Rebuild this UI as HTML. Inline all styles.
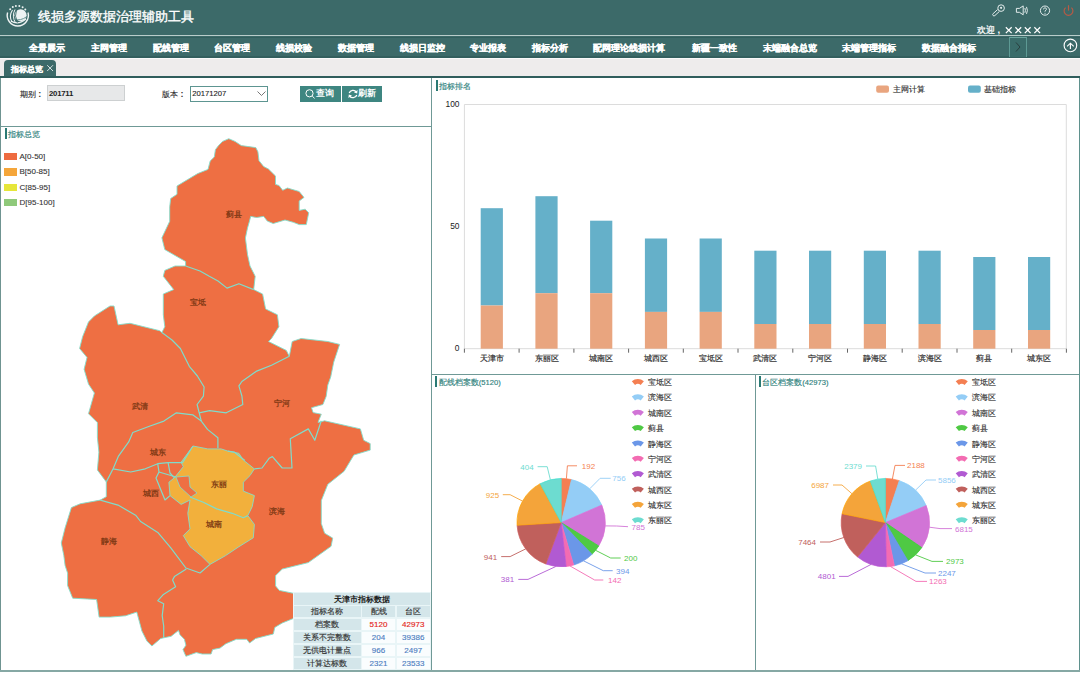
<!DOCTYPE html>
<html><head><meta charset="utf-8">
<style>
*{box-sizing:border-box;margin:0;padding:0}
html,body{width:1080px;height:675px;overflow:hidden;background:#fff;font-family:"Liberation Sans",sans-serif;position:relative}
.abs{position:absolute}
#hdr{left:0;top:0;width:1080px;height:35px;background:#3c6a69}
#hline{left:0;top:35px;width:1080px;height:1.5px;background:#b9cdcb}
#nav{left:0;top:36px;width:1080px;height:21.5px;background:#3c6a69}
.ni{position:absolute;top:38px;height:21px;line-height:21px;color:#fff;font-weight:bold;-webkit-text-stroke:0.25px #fff;font-size:9.3px;white-space:nowrap}
#tabbar{left:0;top:57px;width:1080px;height:20px;background:#eeecec}
#tab{left:4px;top:60px;width:52px;height:17px;background:#3c6a69;border-radius:4px 4px 0 0}
#dline{left:0;top:76.3px;width:1080px;height:2px;background:#2f5d5c}
.vl{position:absolute;background:#6f9996;width:1px}
.hl{position:absolute;background:#6f9996;height:1px}
.ttl{position:absolute;font-size:8px;color:#2f827d;white-space:nowrap;line-height:10px;-webkit-text-stroke:0.15px #2f827d}
.ttl:before{content:"";position:absolute;left:-3.5px;top:-1.5px;width:2px;height:11px;background:#2a7a74}
.lbl{position:absolute;font-size:9px;color:#333;white-space:nowrap;-webkit-text-stroke:0.1px #333}
</style></head><body>
<div id="hdr" class="abs"></div>
<div id="hline" class="abs"></div>
<div id="nav" class="abs"></div>
<div id="tabbar" class="abs"></div>
<div class="abs" style="left:0;top:36.5px;width:1080px;height:1px;background:#325f5e"></div>
<div class="abs" style="left:0;top:56px;width:1080px;height:1.5px;background:#335f5e"></div>
<div class="abs" style="left:0;top:57.5px;width:1080px;height:1.5px;background:#f9f9f9"></div>
<div id="tab" class="abs"></div>
<div id="dline" class="abs"></div>

<!-- logo -->
<svg class="abs" style="left:2px;top:0px" width="30" height="30" viewBox="0 0 30 30">
<g fill="#eef3f3">
<circle cx="8.2" cy="9.3" r="1"/><circle cx="10.8" cy="7.1" r="1"/><circle cx="13.9" cy="5.9" r="1"/><circle cx="17.3" cy="5.9" r="1"/><circle cx="20.6" cy="7.2" r="1"/><circle cx="23.3" cy="9.4" r="1"/>
<circle cx="18.6" cy="15.2" r="6"/>
</g>
<g fill="none" stroke="#eef3f3">
<path d="M5.6 12.5 A10.6 10.6 0 1 0 26 12.5" stroke-width="1.4"/>
<path d="M10.5 10 Q6.5 16 10 22" stroke-width="1.1"/>
<path d="M13 9.5 Q9.5 16 13.5 23" stroke-width="1"/>
<path d="M9 21 Q16 25.5 24 19" stroke-width="1.2"/>
</g>
<path d="M12.5 19 Q18 21.5 25 16.5" fill="none" stroke="#5c8a89" stroke-width="0.9"/>
<path d="M14.5 10 Q12 16 15.5 22.5" fill="none" stroke="#3c6a69" stroke-width="0.9"/>
</svg>
<div class="abs" style="left:38px;top:6.5px;font-size:13px;line-height:20px;color:#fff;white-space:nowrap;-webkit-text-stroke:0.35px #fff">线损多源数据治理辅助工具</div>
<!-- icons -->
<svg class="abs" style="left:990px;top:3px" width="86" height="16" viewBox="0 0 86 16">
<g fill="none" stroke="#e3ecec" stroke-width="1" stroke-linejoin="round">
<path d="M9.38 8.46 L4.88 12.56 A1.3 1.3 0 0 1 3.12 10.64 L7.62 6.54"/>
<circle cx="11.1" cy="5.1" r="3.3"/>
<path d="M26.4 5.4 h3 l3.8 -2.5 v8.9 l-3.8 -2.5 h-3 z"/><path d="M34.9 5 q1 2.4 0 4.8"/><path d="M36.5 3.9 q1.8 3.5 0 7"/>
<circle cx="55" cy="7.6" r="4.6"/>
<path d="M53.5 6.4 q0 -1.6 1.5 -1.6 q1.5 0 1.5 1.4 q0 0.9 -1.5 1.7 v0.8" stroke-width="0.9"/>
</g>
<circle cx="11.1" cy="4.8" r="1.1" fill="#e3ecec"/>
<circle cx="55" cy="10.2" r="0.55" fill="#e3ecec"/>
<g fill="none" stroke="#b85a45" stroke-width="1.15"><path d="M75.6 4.6 a4.4 4.4 0 1 0 5.8 0"/><path d="M78.5 2.2 v5.4"/></g>
</svg>
<div class="abs" style="left:976.5px;top:24.5px;font-size:9px;line-height:11px;color:#fff;white-space:nowrap;-webkit-text-stroke:0.25px #fff">欢迎</div><div class="abs" style="left:997.5px;top:24px;font-size:9.5px;line-height:11px;color:#fff;white-space:nowrap;font-weight:bold">,</div>
<svg class="abs" style="left:1004px;top:26px" width="40" height="9" viewBox="0 0 40 9"><g stroke="#fff" stroke-width="1.25"><path d="M1.85 1.3 L7.65 7.1 M7.65 1.3 L1.85 7.1"/><path d="M11.40 1.3 L17.20 7.1 M17.20 1.3 L11.40 7.1"/><path d="M20.80 1.3 L26.60 7.1 M26.60 1.3 L20.80 7.1"/><path d="M30.35 1.3 L36.15 7.1 M36.15 1.3 L30.35 7.1"/></g></svg>
<div class="ni" style="left:29px">全景展示</div>
<div class="ni" style="left:91px">主网管理</div>
<div class="ni" style="left:152.5px">配线管理</div>
<div class="ni" style="left:214px">台区管理</div>
<div class="ni" style="left:276px">线损校验</div>
<div class="ni" style="left:338px">数据管理</div>
<div class="ni" style="left:400px">线损日监控</div>
<div class="ni" style="left:470px">专业报表</div>
<div class="ni" style="left:532.3px">指标分析</div>
<div class="ni" style="left:593.3px">配网理论线损计算</div>
<div class="ni" style="left:691.7px">新疆一致性</div>
<div class="ni" style="left:762.7px">末端融合总览</div>
<div class="ni" style="left:841.7px">末端管理指标</div>
<div class="ni" style="left:921.7px">数据融合指标</div>
<!-- nav arrow box -->
<div class="abs" style="left:1009px;top:36.5px;width:17.5px;height:20px;background:#3a6c6a;border-left:1px solid #5d9a94;border-right:1px solid #5d9a94;border-top:1px solid #6aa39c"></div>
<svg class="abs" style="left:1013px;top:41px" width="10" height="12" viewBox="0 0 10 12"><path d="M3 1.5 L7 6 L3 10.5" fill="none" stroke="#2a3f3f" stroke-width="1"/></svg>
<svg class="abs" style="left:1063px;top:38px" width="15" height="15" viewBox="0 0 15 15"><g fill="none" stroke="#fff" stroke-width="1.15"><circle cx="7.4" cy="7.4" r="6.3"/><path d="M7.4 10.9 V5.2 M4.1 8.3 L7.4 5.2 L10.7 8.3"/></g></svg>
<!-- tab -->
<div class="abs" style="left:11px;top:61.5px;font-size:8px;line-height:15px;color:#fff;font-weight:bold;-webkit-text-stroke:0.2px #fff;white-space:nowrap">指标总览</div>
<svg class="abs" style="left:46px;top:64px" width="8" height="8" viewBox="0 0 8 8"><path d="M1.2 1.2 L7 7 M7 1.2 L1.2 7" stroke="#e6eeee" stroke-width="0.9"/></svg>



<!-- map -->
<svg class="abs" style="left:0;top:0" width="431" height="669" viewBox="0 0 431 669">
<polygon points="215.4,149.7 218.5,145.6 222.6,141.4 228.8,138.7 235.0,141.4 241.3,145.6 255.8,147.6 257.9,151.8 259.0,160.7 263.7,166.6 268.4,169.0 275.5,176.0 275.5,184.4 279.0,185.5 282.7,190.3 287.4,188.0 299.2,191.5 304.0,197.4 299.2,201.0 299.2,210.4 305.2,209.2 308.7,212.8 306.3,224.6 299.2,224.6 293.3,222.3 285.0,220.0 273.2,223.5 267.3,221.1 263.7,216.4 256.6,217.5 250.7,216.4 249.5,221.0 247.5,228.0 245.4,238.0 247.5,254.5 250.0,266.0 255.2,276.3 253.7,289.6 262.6,294.0 265.6,308.9 277.4,314.8 278.9,326.7 271.5,338.5 268.5,341.5 286.3,350.4 289.3,356.3 292.2,341.5 301.1,338.5 327.8,341.5 339.6,344.4 333.7,362.2 330.7,377.0 327.8,385.0 326.2,396.3 322.9,404.5 311.5,407.7 313.1,412.6 321.3,414.2 318.0,422.4 324.6,420.8 360.4,428.9 363.7,440.3 370.2,443.6 370.2,450.1 353.9,455.0 344.1,471.3 327.8,484.3 321.3,500.6 321.3,523.5 324.6,533.2 332.7,538.1 331.1,546.3 308.3,562.6 282.2,569.1 275.6,575.6 275.6,585.9 279.3,590.4 293.3,593.3 300.0,594.0 300.0,618.0 293.3,618.5 282.2,623.0 274.8,627.4 273.3,634.0 255.6,638.5 249.6,643.0 246.7,639.3 236.3,639.3 225.9,643.7 220.0,648.1 212.6,649.6 211.1,654.0 202.2,654.0 196.3,652.6 185.9,656.3 183.0,649.6 185.9,645.2 184.4,639.3 180.0,634.8 178.5,630.4 171.1,636.3 163.7,637.8 160.7,638.5 151.9,646.0 146.9,641.0 141.9,631.0 136.8,612.1 125.5,615.8 110.4,617.1 99.1,617.1 96.6,599.5 72.7,598.2 67.6,585.6 67.6,573.1 65.1,565.5 63.8,555.4 61.3,542.9 65.1,527.8 71.4,507.6 80.2,503.8 100.3,500.1 106.3,496.7 106.3,481.9 97.4,470.0 98.9,452.2 97.4,437.4 97.4,422.6 88.5,413.7 94.4,393.0 88.5,384.1 84.1,369.3 87.0,357.4 79.6,348.5 82.6,336.7 88.5,321.9 94.4,316.0 110.0,306.0 114.0,306.0 118.1,324.8 130.0,323.3 159.6,330.7 161.9,332.6 164.8,326.7 163.3,314.8 163.3,294.0 173.7,289.6 163.3,276.3 164.8,270.4 175.0,266.0 185.6,266.0 185.6,261.5 164.8,249.6 161.9,237.8 169.7,221.3 169.7,206.8 170.7,198.5 177.0,194.3 177.0,186.0 187.3,179.8 197.7,173.6 208.0,169.4 210.2,161.0 214.3,157.0" fill="#ee6f43" stroke="#84dccb" stroke-width="0.9" stroke-linejoin="round"/>
<polygon points="193.0,446.0 207.8,448.9 221.1,448.9 227.8,451.1 238.9,453.3 243.3,460.0 254.4,468.9 250.0,475.6 243.3,482.2 243.3,491.1 254.4,495.6 252.2,506.7 247.8,515.6 254.4,524.4 253.3,537.8 238.9,546.7 225.6,555.6 210.0,564.4 201.1,555.6 190.0,546.7 183.3,535.6 190.0,528.9 187.8,513.3 190.0,500.0 181.1,504.4 170.0,495.6 168.9,482.2 174.4,477.8 183.3,466.7 181.1,462.2" fill="#f2b03c" stroke="#84dccb" stroke-width="0.9"/>
<polygon points="176.0,477.0 189.0,476.0 190.0,487.0 197.0,493.0 191.0,497.0 180.0,487.0" fill="#ee6f43" stroke="#84dccb" stroke-width="0.8"/>
<g fill="none" stroke="#7fdccb" stroke-width="1.2" stroke-linejoin="round">
<polyline points="185.6,266.0 200.0,271.0 209.3,276.3 218.0,281.0 227.0,288.1 238.9,283.7 253.7,289.6"/>
<polyline points="161.9,332.6 172.0,340.0 180.4,348.5 189.3,366.3 197.4,376.0 204.1,387.0 203.4,396.2 197.1,404.5 199.2,412.8 201.3,421.1"/>
<polyline points="289.3,356.3 271.5,365.2 256.7,371.1 241.9,381.5 238.9,385.9 241.9,396.0 242.8,404.5 226.2,412.8 209.6,410.7 199.2,412.8"/>
<polyline points="201.3,421.1 193.0,414.9 176.4,412.8 163.9,421.1 149.4,426.3 132.8,432.5 128.7,441.9 118.3,456.4 113.1,468.8 106.3,481.9"/>
<polyline points="201.3,421.1 207.5,429.4 217.9,437.7 217.9,448.1"/>
<polyline points="227.8,451.1 234.5,452.2 244.9,460.5"/>
<polyline points="254.4,468.9 262.0,468.0 269.1,458.3 272.4,456.6 282.2,468.0 292.0,468.0 290.3,438.7 308.3,428.9 314.8,440.3 321.3,420.8"/>
<polyline points="113.1,468.8 130.7,472.0 145.3,468.8 157.7,463.7 168.1,462.6 182.6,462.6 193.0,446.0"/>
<polyline points="157.7,463.7 159.0,472.0 156.0,478.0 165.0,500.0 170.0,495.6"/>
<polyline points="168.1,462.6 170.0,473.0 174.4,477.8"/>
<polyline points="159.0,472.0 176.0,477.0"/>
<polyline points="100.3,500.1 118.0,505.1 135.6,515.2 140.6,521.5 158.2,532.8 170.8,547.9 185.9,568.0 200.0,573.0 210.0,564.4"/>
<polyline points="190.0,497.0 203.3,502.2 216.7,508.9 232.2,513.3 243.3,517.8 247.8,515.6"/>
<polyline points="186.3,569.0 174.4,576.6 172.6,580.0 175.6,586.7 163.0,594.8 157.8,600.7 163.7,603.7 162.2,615.6 163.7,626.0 163.7,637.8"/>
</g>
<g font-size="7.6" fill="#7a3612" stroke="#7a3612" stroke-width="0.25" text-anchor="middle" font-family="Liberation Sans">
<text x="234" y="217.3">蓟县</text>
<text x="198" y="305.3">宝坻</text>
<text x="140.4" y="408.8">武清</text>
<text x="282" y="406.3">宁河</text>
<text x="158" y="454.8">城东</text>
<text x="150.7" y="496.3">城西</text>
<text x="218.9" y="486.8">东丽</text>
<text x="214.4" y="526.8">城南</text>
<text x="276.7" y="513.8">滨海</text>
<text x="109.2" y="543.8">静海</text>
</g></svg>
<!-- /map -->
<!-- table -->
<div class="abs" style="left:293px;top:591.5px;width:138px;height:78px;background:#e9f5f7"></div>
<div class="abs" style="left:294px;top:592.6px;width:136px;height:12px;background:#d4e6ea"></div>
<div class="abs" style="left:294px;top:592.6px;width:136px;height:12px;line-height:13.4px;text-align:center;font-size:8px;font-weight:bold;color:#222">天津市指标数据</div>
<div class="abs" style="left:294px;top:605.8px;width:66.7px;height:11.2px;background:#d4e6ea;line-height:12.2px;text-align:center;font-size:8px;color:#333;white-space:nowrap;-webkit-text-stroke:0.15px #333">指标名称</div>
<div class="abs" style="left:362px;top:605.8px;width:33.0px;height:11.2px;background:#d4e6ea;line-height:12.2px;text-align:center;font-size:8px;color:#333;white-space:nowrap;-webkit-text-stroke:0.15px #333">配线</div>
<div class="abs" style="left:396.7px;top:605.8px;width:33.1px;height:11.2px;background:#d4e6ea;line-height:12.2px;text-align:center;font-size:8px;color:#333;white-space:nowrap;-webkit-text-stroke:0.15px #333">台区</div>
<div class="abs" style="left:294px;top:618.5px;width:66.7px;height:11.8px;background:#d4e6ea;line-height:12.8px;text-align:center;font-size:8px;color:#333;white-space:nowrap;-webkit-text-stroke:0.15px #333">档案数</div>
<div class="abs" style="left:362px;top:618.5px;width:33.0px;height:11.8px;background:#fafdfe;line-height:12.8px;text-align:center;font-size:8px;color:#e42520;white-space:nowrap;-webkit-text-stroke:0.15px #e42520">5120</div>
<div class="abs" style="left:396.7px;top:618.5px;width:33.1px;height:11.8px;background:#fafdfe;line-height:12.8px;text-align:center;font-size:8px;color:#e42520;white-space:nowrap;-webkit-text-stroke:0.15px #e42520">42973</div>
<div class="abs" style="left:294px;top:631.8px;width:66.7px;height:11.6px;background:#d4e6ea;line-height:12.6px;text-align:center;font-size:8px;color:#333;white-space:nowrap;-webkit-text-stroke:0.15px #333">关系不完整数</div>
<div class="abs" style="left:362px;top:631.8px;width:33.0px;height:11.6px;background:#fafdfe;line-height:12.6px;text-align:center;font-size:8px;color:#4f7fc2;white-space:nowrap;-webkit-text-stroke:0.15px #4f7fc2">204</div>
<div class="abs" style="left:396.7px;top:631.8px;width:33.1px;height:11.6px;background:#fafdfe;line-height:12.6px;text-align:center;font-size:8px;color:#4f7fc2;white-space:nowrap;-webkit-text-stroke:0.15px #4f7fc2">39386</div>
<div class="abs" style="left:294px;top:644.8px;width:66.7px;height:11.4px;background:#d4e6ea;line-height:12.4px;text-align:center;font-size:8px;color:#333;white-space:nowrap;-webkit-text-stroke:0.15px #333">无供电计量点</div>
<div class="abs" style="left:362px;top:644.8px;width:33.0px;height:11.4px;background:#fafdfe;line-height:12.4px;text-align:center;font-size:8px;color:#4f7fc2;white-space:nowrap;-webkit-text-stroke:0.15px #4f7fc2">966</div>
<div class="abs" style="left:396.7px;top:644.8px;width:33.1px;height:11.4px;background:#fafdfe;line-height:12.4px;text-align:center;font-size:8px;color:#4f7fc2;white-space:nowrap;-webkit-text-stroke:0.15px #4f7fc2">2497</div>
<div class="abs" style="left:294px;top:657.5px;width:66.7px;height:11.3px;background:#d4e6ea;line-height:12.3px;text-align:center;font-size:8px;color:#333;white-space:nowrap;-webkit-text-stroke:0.15px #333">计算达标数</div>
<div class="abs" style="left:362px;top:657.5px;width:33.0px;height:11.3px;background:#fafdfe;line-height:12.3px;text-align:center;font-size:8px;color:#4f7fc2;white-space:nowrap;-webkit-text-stroke:0.15px #4f7fc2">2321</div>
<div class="abs" style="left:396.7px;top:657.5px;width:33.1px;height:11.3px;background:#fafdfe;line-height:12.3px;text-align:center;font-size:8px;color:#4f7fc2;white-space:nowrap;-webkit-text-stroke:0.15px #4f7fc2">23533</div>
<!-- /table -->
<!-- bar -->
<svg class="abs" style="left:0;top:0" width="1080" height="675" viewBox="0 0 1080 675">
<path d="M464.4 104.5 H1066.3 V348.7 M464.4 104.5 V348.7 H1066.3" fill="none" stroke="#dcdcdc" stroke-width="1"/>
<line x1="464.4" y1="348.7" x2="464.4" y2="352.7" stroke="#555" stroke-width="0.9"/>
<line x1="519.1" y1="348.7" x2="519.1" y2="352.7" stroke="#555" stroke-width="0.9"/>
<line x1="573.9" y1="348.7" x2="573.9" y2="352.7" stroke="#555" stroke-width="0.9"/>
<line x1="628.6" y1="348.7" x2="628.6" y2="352.7" stroke="#555" stroke-width="0.9"/>
<line x1="683.3" y1="348.7" x2="683.3" y2="352.7" stroke="#555" stroke-width="0.9"/>
<line x1="738.0" y1="348.7" x2="738.0" y2="352.7" stroke="#555" stroke-width="0.9"/>
<line x1="792.8" y1="348.7" x2="792.8" y2="352.7" stroke="#555" stroke-width="0.9"/>
<line x1="847.5" y1="348.7" x2="847.5" y2="352.7" stroke="#555" stroke-width="0.9"/>
<line x1="902.2" y1="348.7" x2="902.2" y2="352.7" stroke="#555" stroke-width="0.9"/>
<line x1="957.0" y1="348.7" x2="957.0" y2="352.7" stroke="#555" stroke-width="0.9"/>
<line x1="1011.7" y1="348.7" x2="1011.7" y2="352.7" stroke="#555" stroke-width="0.9"/>
<line x1="1066.4" y1="348.7" x2="1066.4" y2="352.7" stroke="#555" stroke-width="0.9"/>
<rect x="480.7" y="208.2" width="22.2" height="97.3" fill="#65b0c9"/>
<rect x="480.7" y="305.5" width="22.2" height="43.2" fill="#e9a57f"/>
<text x="491.8" y="361.2" font-size="7.6" fill="#333" stroke="#333" stroke-width="0.2" text-anchor="middle">天津市</text>
<rect x="535.4" y="196.2" width="22.2" height="97.0" fill="#65b0c9"/>
<rect x="535.4" y="293.2" width="22.2" height="55.5" fill="#e9a57f"/>
<text x="546.5" y="361.2" font-size="7.6" fill="#333" stroke="#333" stroke-width="0.2" text-anchor="middle">东丽区</text>
<rect x="590.1" y="220.7" width="22.2" height="72.5" fill="#65b0c9"/>
<rect x="590.1" y="293.2" width="22.2" height="55.5" fill="#e9a57f"/>
<text x="601.2" y="361.2" font-size="7.6" fill="#333" stroke="#333" stroke-width="0.2" text-anchor="middle">城南区</text>
<rect x="644.9" y="238.5" width="22.2" height="73.4" fill="#65b0c9"/>
<rect x="644.9" y="311.9" width="22.2" height="36.8" fill="#e9a57f"/>
<text x="656.0" y="361.2" font-size="7.6" fill="#333" stroke="#333" stroke-width="0.2" text-anchor="middle">城西区</text>
<rect x="699.6" y="238.5" width="22.2" height="73.4" fill="#65b0c9"/>
<rect x="699.6" y="311.9" width="22.2" height="36.8" fill="#e9a57f"/>
<text x="710.7" y="361.2" font-size="7.6" fill="#333" stroke="#333" stroke-width="0.2" text-anchor="middle">宝坻区</text>
<rect x="754.3" y="250.7" width="22.2" height="73.3" fill="#65b0c9"/>
<rect x="754.3" y="324" width="22.2" height="24.7" fill="#e9a57f"/>
<text x="765.4" y="361.2" font-size="7.6" fill="#333" stroke="#333" stroke-width="0.2" text-anchor="middle">武清区</text>
<rect x="809.0" y="250.7" width="22.2" height="73.3" fill="#65b0c9"/>
<rect x="809.0" y="324" width="22.2" height="24.7" fill="#e9a57f"/>
<text x="820.1" y="361.2" font-size="7.6" fill="#333" stroke="#333" stroke-width="0.2" text-anchor="middle">宁河区</text>
<rect x="863.8" y="250.7" width="22.2" height="73.3" fill="#65b0c9"/>
<rect x="863.8" y="324" width="22.2" height="24.7" fill="#e9a57f"/>
<text x="874.9" y="361.2" font-size="7.6" fill="#333" stroke="#333" stroke-width="0.2" text-anchor="middle">静海区</text>
<rect x="918.5" y="250.7" width="22.2" height="73.3" fill="#65b0c9"/>
<rect x="918.5" y="324" width="22.2" height="24.7" fill="#e9a57f"/>
<text x="929.6" y="361.2" font-size="7.6" fill="#333" stroke="#333" stroke-width="0.2" text-anchor="middle">滨海区</text>
<rect x="973.2" y="257" width="22.2" height="73.0" fill="#65b0c9"/>
<rect x="973.2" y="330" width="22.2" height="18.7" fill="#e9a57f"/>
<text x="984.3" y="361.2" font-size="7.6" fill="#333" stroke="#333" stroke-width="0.2" text-anchor="middle">蓟县</text>
<rect x="1028.0" y="257" width="22.2" height="73.0" fill="#65b0c9"/>
<rect x="1028.0" y="330" width="22.2" height="18.7" fill="#e9a57f"/>
<text x="1039.1" y="361.2" font-size="7.6" fill="#333" stroke="#333" stroke-width="0.2" text-anchor="middle">城东区</text>
<g font-size="8.4" fill="#222" text-anchor="end"><text x="459.5" y="107.2">100</text><text x="459.5" y="229.3">50</text><text x="459.5" y="351.4">0</text></g>
<rect x="876.2" y="85.4" width="12.8" height="7.4" rx="2" fill="#e9a57f"/><rect x="968" y="85.4" width="12.8" height="7.4" rx="2" fill="#65b0c9"/>
<g font-size="7.6" fill="#333" stroke="#333" stroke-width="0.15"><text x="892.5" y="92">主网计算</text><text x="984.4" y="92">基础指标</text></g>
</svg>
<!-- /bar -->
<!-- pie -->
<svg class="abs" style="left:0;top:0" width="1080" height="675" viewBox="0 0 1080 675" font-size="8">
<path d="M561.2 522.6 L561.20 478.40 A44.2 44.2 0 0 1 571.52 479.62 Z" fill="#f47f52" stroke="#ff7f50" stroke-width="0.7" stroke-linejoin="round"/>
<path d="M561.2 522.6 L571.52 479.62 A44.2 44.2 0 0 1 601.78 505.09 Z" fill="#94cdf6" stroke="#87cefa" stroke-width="0.7" stroke-linejoin="round"/>
<path d="M561.2 522.6 L601.78 505.09 A44.2 44.2 0 0 1 598.74 545.93 Z" fill="#d174d6" stroke="#da70d6" stroke-width="0.7" stroke-linejoin="round"/>
<path d="M561.2 522.6 L598.74 545.93 A44.2 44.2 0 0 1 591.95 554.35 Z" fill="#4fc944" stroke="#32cd32" stroke-width="0.7" stroke-linejoin="round"/>
<path d="M561.2 522.6 L591.95 554.35 A44.2 44.2 0 0 1 573.67 565.01 Z" fill="#6b97e8" stroke="#6495ed" stroke-width="0.7" stroke-linejoin="round"/>
<path d="M561.2 522.6 L573.67 565.01 A44.2 44.2 0 0 1 566.13 566.52 Z" fill="#f36cb2" stroke="#ff69b4" stroke-width="0.7" stroke-linejoin="round"/>
<path d="M561.2 522.6 L566.13 566.52 A44.2 44.2 0 0 1 545.80 564.03 Z" fill="#b15ad2" stroke="#ba55d3" stroke-width="0.7" stroke-linejoin="round"/>
<path d="M561.2 522.6 L545.80 564.03 A44.2 44.2 0 0 1 517.08 525.26 Z" fill="#c0605c" stroke="#cd5c5c" stroke-width="0.7" stroke-linejoin="round"/>
<path d="M561.2 522.6 L517.08 525.26 A44.2 44.2 0 0 1 540.17 483.72 Z" fill="#f4a43a" stroke="#ffa500" stroke-width="0.7" stroke-linejoin="round"/>
<path d="M561.2 522.6 L540.17 483.72 A44.2 44.2 0 0 1 561.20 478.40 Z" fill="#6ddcd0" stroke="#40e0d0" stroke-width="0.7" stroke-linejoin="round"/>
<polyline points="566.4,478.7 567.4,465.8 577.0,465.8" fill="none" stroke="#f47f52" stroke-width="0.9"/>
<text x="581.8" y="468.7" fill="#f47f52" text-anchor="start">192</text>
<polyline points="589.7,488.8 600.1,478.3 610.7,478.3" fill="none" stroke="#94cdf6" stroke-width="0.9"/>
<text x="612.3" y="481.2" fill="#94cdf6" text-anchor="start">756</text>
<polyline points="605.3,525.9 616.7,526.0 628.0,526.7" fill="none" stroke="#d174d6" stroke-width="0.9"/>
<text x="631.6" y="529.6" fill="#d174d6" text-anchor="start">785</text>
<polyline points="595.6,550.3 610.7,558.0 620.7,558.0" fill="none" stroke="#4fc944" stroke-width="0.9"/>
<text x="624.0" y="560.9" fill="#4fc944" text-anchor="start">200</text>
<polyline points="583.5,560.8 603.3,570.7 612.7,570.7" fill="none" stroke="#6b97e8" stroke-width="0.9"/>
<text x="616.0" y="573.6" fill="#6b97e8" text-anchor="start">394</text>
<polyline points="569.9,565.9 594.7,580.0 603.3,580.0" fill="none" stroke="#f36cb2" stroke-width="0.9"/>
<text x="608.0" y="582.9" fill="#f36cb2" text-anchor="start">142</text>
<polyline points="555.8,566.5 528.0,579.4 518.3,579.4" fill="none" stroke="#b15ad2" stroke-width="0.9"/>
<text x="514.2" y="582.3" fill="#b15ad2" text-anchor="end">381</text>
<polyline points="525.7,548.9 510.1,556.6 501.2,556.6" fill="none" stroke="#c0605c" stroke-width="0.9"/>
<text x="497.1" y="559.5" fill="#c0605c" text-anchor="end">941</text>
<polyline points="522.6,501.1 510.1,494.7 502.8,494.7" fill="none" stroke="#f4a43a" stroke-width="0.9"/>
<text x="499.2" y="497.6" fill="#f4a43a" text-anchor="end">925</text>
<polyline points="550.4,479.8 547.2,466.7 537.6,466.7" fill="none" stroke="#6ddcd0" stroke-width="0.9"/>
<text x="533.7" y="469.6" fill="#6ddcd0" text-anchor="end">404</text>
<path d="M631.81 381.20 A9.4 9.4 0 0 1 643.89 381.20 L640.68 385.03 A4.4 4.4 0 0 0 635.02 385.03 Z" fill="#f47f52"/>
<text x="647.7" y="385.09999999999997" fill="#333" stroke="#333" stroke-width="0.15">宝坻区</text>
<path d="M631.81 396.55 A9.4 9.4 0 0 1 643.89 396.55 L640.68 400.38 A4.4 4.4 0 0 0 635.02 400.38 Z" fill="#94cdf6"/>
<text x="647.7" y="400.45" fill="#333" stroke="#333" stroke-width="0.15">滨海区</text>
<path d="M631.81 411.90 A9.4 9.4 0 0 1 643.89 411.90 L640.68 415.73 A4.4 4.4 0 0 0 635.02 415.73 Z" fill="#d174d6"/>
<text x="647.7" y="415.79999999999995" fill="#333" stroke="#333" stroke-width="0.15">城南区</text>
<path d="M631.81 427.25 A9.4 9.4 0 0 1 643.89 427.25 L640.68 431.08 A4.4 4.4 0 0 0 635.02 431.08 Z" fill="#4fc944"/>
<text x="647.7" y="431.15" fill="#333" stroke="#333" stroke-width="0.15">蓟县</text>
<path d="M631.81 442.60 A9.4 9.4 0 0 1 643.89 442.60 L640.68 446.43 A4.4 4.4 0 0 0 635.02 446.43 Z" fill="#6b97e8"/>
<text x="647.7" y="446.49999999999994" fill="#333" stroke="#333" stroke-width="0.15">静海区</text>
<path d="M631.81 457.95 A9.4 9.4 0 0 1 643.89 457.95 L640.68 461.78 A4.4 4.4 0 0 0 635.02 461.78 Z" fill="#f36cb2"/>
<text x="647.7" y="461.84999999999997" fill="#333" stroke="#333" stroke-width="0.15">宁河区</text>
<path d="M631.81 473.30 A9.4 9.4 0 0 1 643.89 473.30 L640.68 477.13 A4.4 4.4 0 0 0 635.02 477.13 Z" fill="#b15ad2"/>
<text x="647.7" y="477.19999999999993" fill="#333" stroke="#333" stroke-width="0.15">武清区</text>
<path d="M631.81 488.65 A9.4 9.4 0 0 1 643.89 488.65 L640.68 492.48 A4.4 4.4 0 0 0 635.02 492.48 Z" fill="#c0605c"/>
<text x="647.7" y="492.54999999999995" fill="#333" stroke="#333" stroke-width="0.15">城西区</text>
<path d="M631.81 504.00 A9.4 9.4 0 0 1 643.89 504.00 L640.68 507.83 A4.4 4.4 0 0 0 635.02 507.83 Z" fill="#f4a43a"/>
<text x="647.7" y="507.9" fill="#333" stroke="#333" stroke-width="0.15">城东区</text>
<path d="M631.81 519.35 A9.4 9.4 0 0 1 643.89 519.35 L640.68 523.18 A4.4 4.4 0 0 0 635.02 523.18 Z" fill="#6ddcd0"/>
<text x="647.7" y="523.25" fill="#333" stroke="#333" stroke-width="0.15">东丽区</text>
<path d="M885.4 522.6 L885.40 478.40 A44.2 44.2 0 0 1 899.30 480.64 Z" fill="#f47f52" stroke="#ff7f50" stroke-width="0.7" stroke-linejoin="round"/>
<path d="M885.4 522.6 L899.30 480.64 A44.2 44.2 0 0 1 926.20 505.61 Z" fill="#94cdf6" stroke="#87cefa" stroke-width="0.7" stroke-linejoin="round"/>
<path d="M885.4 522.6 L926.20 505.61 A44.2 44.2 0 0 1 921.84 547.62 Z" fill="#d174d6" stroke="#da70d6" stroke-width="0.7" stroke-linejoin="round"/>
<path d="M885.4 522.6 L921.84 547.62 A44.2 44.2 0 0 1 907.91 560.64 Z" fill="#4fc944" stroke="#32cd32" stroke-width="0.7" stroke-linejoin="round"/>
<path d="M885.4 522.6 L907.91 560.64 A44.2 44.2 0 0 1 894.43 565.87 Z" fill="#6b97e8" stroke="#6495ed" stroke-width="0.7" stroke-linejoin="round"/>
<path d="M885.4 522.6 L894.43 565.87 A44.2 44.2 0 0 1 886.33 566.79 Z" fill="#f36cb2" stroke="#ff69b4" stroke-width="0.7" stroke-linejoin="round"/>
<path d="M885.4 522.6 L886.33 566.79 A44.2 44.2 0 0 1 857.58 556.95 Z" fill="#b15ad2" stroke="#ba55d3" stroke-width="0.7" stroke-linejoin="round"/>
<path d="M885.4 522.6 L857.58 556.95 A44.2 44.2 0 0 1 842.09 513.76 Z" fill="#c0605c" stroke="#cd5c5c" stroke-width="0.7" stroke-linejoin="round"/>
<path d="M885.4 522.6 L842.09 513.76 A44.2 44.2 0 0 1 870.33 481.05 Z" fill="#f4a43a" stroke="#ffa500" stroke-width="0.7" stroke-linejoin="round"/>
<path d="M885.4 522.6 L870.33 481.05 A44.2 44.2 0 0 1 885.40 478.40 Z" fill="#6ddcd0" stroke="#40e0d0" stroke-width="0.7" stroke-linejoin="round"/>
<polyline points="892.4,479.0 895.0,465.4 905.0,465.4" fill="none" stroke="#f47f52" stroke-width="0.9"/>
<text x="907.0" y="468.3" fill="#f47f52" text-anchor="start">2188</text>
<polyline points="915.5,490.2 926.0,480.0 936.0,480.0" fill="none" stroke="#94cdf6" stroke-width="0.9"/>
<text x="938.0" y="482.9" fill="#94cdf6" text-anchor="start">5856</text>
<polyline points="929.4,527.2 940.0,528.6 952.0,528.6" fill="none" stroke="#d174d6" stroke-width="0.9"/>
<text x="955.0" y="531.5" fill="#d174d6" text-anchor="start">6815</text>
<polyline points="915.6,554.9 932.0,561.4 943.0,561.4" fill="none" stroke="#4fc944" stroke-width="0.9"/>
<text x="946.0" y="564.3" fill="#4fc944" text-anchor="start">2973</text>
<polyline points="901.4,563.8 925.0,573.0 936.0,573.0" fill="none" stroke="#6b97e8" stroke-width="0.9"/>
<text x="938.0" y="575.9" fill="#6b97e8" text-anchor="start">2247</text>
<polyline points="890.4,566.5 916.0,581.4 927.0,581.4" fill="none" stroke="#f36cb2" stroke-width="0.9"/>
<text x="929.0" y="584.3" fill="#f36cb2" text-anchor="start">1263</text>
<polyline points="871.1,564.4 848.0,576.4 839.0,576.4" fill="none" stroke="#b15ad2" stroke-width="0.9"/>
<text x="835.6" y="579.3" fill="#b15ad2" text-anchor="end">4801</text>
<polyline points="843.8,537.5 830.0,542.0 820.0,542.0" fill="none" stroke="#c0605c" stroke-width="0.9"/>
<text x="816.0" y="544.9" fill="#c0605c" text-anchor="end">7464</text>
<polyline points="851.9,493.7 842.0,485.0 833.0,485.0" fill="none" stroke="#f4a43a" stroke-width="0.9"/>
<text x="829.0" y="487.9" fill="#f4a43a" text-anchor="end">6987</text>
<polyline points="877.8,479.1 875.6,466.0 866.0,466.0" fill="none" stroke="#6ddcd0" stroke-width="0.9"/>
<text x="862.0" y="468.9" fill="#6ddcd0" text-anchor="end">2379</text>
<path d="M955.71 381.20 A9.4 9.4 0 0 1 967.79 381.20 L964.58 385.03 A4.4 4.4 0 0 0 958.92 385.03 Z" fill="#f47f52"/>
<text x="971.6" y="385.09999999999997" fill="#333" stroke="#333" stroke-width="0.15">宝坻区</text>
<path d="M955.71 396.55 A9.4 9.4 0 0 1 967.79 396.55 L964.58 400.38 A4.4 4.4 0 0 0 958.92 400.38 Z" fill="#94cdf6"/>
<text x="971.6" y="400.45" fill="#333" stroke="#333" stroke-width="0.15">滨海区</text>
<path d="M955.71 411.90 A9.4 9.4 0 0 1 967.79 411.90 L964.58 415.73 A4.4 4.4 0 0 0 958.92 415.73 Z" fill="#d174d6"/>
<text x="971.6" y="415.79999999999995" fill="#333" stroke="#333" stroke-width="0.15">城南区</text>
<path d="M955.71 427.25 A9.4 9.4 0 0 1 967.79 427.25 L964.58 431.08 A4.4 4.4 0 0 0 958.92 431.08 Z" fill="#4fc944"/>
<text x="971.6" y="431.15" fill="#333" stroke="#333" stroke-width="0.15">蓟县</text>
<path d="M955.71 442.60 A9.4 9.4 0 0 1 967.79 442.60 L964.58 446.43 A4.4 4.4 0 0 0 958.92 446.43 Z" fill="#6b97e8"/>
<text x="971.6" y="446.49999999999994" fill="#333" stroke="#333" stroke-width="0.15">静海区</text>
<path d="M955.71 457.95 A9.4 9.4 0 0 1 967.79 457.95 L964.58 461.78 A4.4 4.4 0 0 0 958.92 461.78 Z" fill="#f36cb2"/>
<text x="971.6" y="461.84999999999997" fill="#333" stroke="#333" stroke-width="0.15">宁河区</text>
<path d="M955.71 473.30 A9.4 9.4 0 0 1 967.79 473.30 L964.58 477.13 A4.4 4.4 0 0 0 958.92 477.13 Z" fill="#b15ad2"/>
<text x="971.6" y="477.19999999999993" fill="#333" stroke="#333" stroke-width="0.15">武清区</text>
<path d="M955.71 488.65 A9.4 9.4 0 0 1 967.79 488.65 L964.58 492.48 A4.4 4.4 0 0 0 958.92 492.48 Z" fill="#c0605c"/>
<text x="971.6" y="492.54999999999995" fill="#333" stroke="#333" stroke-width="0.15">城西区</text>
<path d="M955.71 504.00 A9.4 9.4 0 0 1 967.79 504.00 L964.58 507.83 A4.4 4.4 0 0 0 958.92 507.83 Z" fill="#f4a43a"/>
<text x="971.6" y="507.9" fill="#333" stroke="#333" stroke-width="0.15">城东区</text>
<path d="M955.71 519.35 A9.4 9.4 0 0 1 967.79 519.35 L964.58 523.18 A4.4 4.4 0 0 0 958.92 523.18 Z" fill="#6ddcd0"/>
<text x="971.6" y="523.25" fill="#333" stroke="#333" stroke-width="0.15">东丽区</text>
</svg>
<!-- /pie -->
<!-- controls -->
<div class="abs" style="left:20px;top:88.8px;font-size:8px;line-height:11px;color:#333;white-space:nowrap;-webkit-text-stroke:0.15px #333">期别</div><div class="abs" style="left:38.3px;top:88.5px;font-size:9px;line-height:11px;color:#333;white-space:nowrap;font-weight:bold">:</div>
<div class="abs" style="left:47px;top:85px;width:78px;height:16px;background:#e7e8e9;border:1px solid #cdd0d1"></div>
<div class="abs" style="left:49px;top:89px;font-size:7.8px;line-height:10px;color:#222;font-weight:bold;white-space:nowrap;letter-spacing:-0.25px">201711</div>
<div class="abs" style="left:162.2px;top:88.8px;font-size:8px;line-height:11px;color:#333;white-space:nowrap;-webkit-text-stroke:0.15px #333">版本</div><div class="abs" style="left:180.5px;top:88.5px;font-size:9px;line-height:11px;color:#333;white-space:nowrap;font-weight:bold">:</div>
<div class="abs" style="left:190px;top:85.5px;width:78px;height:16px;background:#fff;border:1px solid #5d9591"></div>
<div class="abs" style="left:192.2px;top:88.6px;font-size:7.7px;line-height:10px;color:#222;white-space:nowrap;-webkit-text-stroke:0.1px #222">20171207</div>
<svg class="abs" style="left:256px;top:89px" width="11" height="9" viewBox="0 0 11 9"><path d="M1.5 2.5 L5.5 6.5 L9.5 2.5" fill="none" stroke="#666" stroke-width="0.9"/></svg>
<div class="abs" style="left:300px;top:85.5px;width:40.5px;height:16px;background:#3e8681"></div>
<div class="abs" style="left:342px;top:85.5px;width:40px;height:16px;background:#3e8681"></div>
<svg class="abs" style="left:304px;top:88px" width="12" height="12" viewBox="0 0 12 12"><g fill="none" stroke="#fff" stroke-width="1"><circle cx="5.5" cy="5.3" r="3.6"/><path d="M8.2 8 L10.6 10.4"/></g></svg>
<div class="abs" style="left:315.5px;top:88px;font-size:8.8px;line-height:11px;color:#fff;font-weight:bold;white-space:nowrap">查询</div>
<svg class="abs" style="left:346.5px;top:88px" width="12" height="12" viewBox="0 0 12 12"><g fill="none" stroke="#fff" stroke-width="1.3"><path d="M2.2 5 A4 4 0 0 1 9.4 4.2"/><path d="M9.8 7 A4 4 0 0 1 2.6 7.8"/></g><path d="M10.6 2 L10.2 5.6 L7 4.4 z M1.4 10 L1.8 6.4 L5 7.6 z" fill="#fff"/></svg>
<div class="abs" style="left:357.5px;top:88px;font-size:8.8px;line-height:11px;color:#fff;font-weight:bold;white-space:nowrap">刷新</div>

<!-- titles -->
<div class="ttl" style="left:8.2px;top:129.6px">指标总览</div>
<div class="ttl" style="left:439px;top:81.5px">指标排名</div>
<div class="ttl" style="left:438.8px;top:377.9px;font-size:7.6px">配线档案数(5120)</div>
<div class="ttl" style="left:762.3px;top:377.9px;font-size:7.6px">台区档案数(42973)</div>

<!-- legend -->
<div class="abs" style="left:3.9px;top:152.7px;width:12.7px;height:7.4px;background:#ee6b40"></div>
<div class="abs" style="left:3.9px;top:168.2px;width:12.7px;height:7.4px;background:#f5a63a"></div>
<div class="abs" style="left:3.9px;top:183.6px;width:12.7px;height:7.4px;background:#e6e63a"></div>
<div class="abs" style="left:3.9px;top:199px;width:12.7px;height:7.4px;background:#8fc97a"></div>
<div class="lbl" style="left:19.5px;top:150.5px;font-size:8px;line-height:11px">A[0-50]</div>
<div class="lbl" style="left:19.5px;top:166px;font-size:8px;line-height:11px">B[50-85]</div>
<div class="lbl" style="left:19.5px;top:181.5px;font-size:8px;line-height:11px">C[85-95]</div>
<div class="lbl" style="left:19.5px;top:197px;font-size:8px;line-height:11px">D[95-100]</div>

<!-- borders -->
<div class="vl" style="left:0;top:78px;height:593px;background:#6f9491;width:1px"></div>
<div class="vl" style="left:1079px;top:78px;height:592px;background:#5f918d;width:1px"></div>
<div class="hl" style="left:0;top:670px;width:1080px;background:#86a8a4;height:1.6px"></div>
<div class="vl" style="left:431px;top:78px;height:592px"></div>
<div class="hl" style="left:0;top:126px;width:431px"></div>
<div class="hl" style="left:431px;top:373.6px;width:648px"></div>
<div class="vl" style="left:755px;top:374px;height:296px"></div>

</body></html>
